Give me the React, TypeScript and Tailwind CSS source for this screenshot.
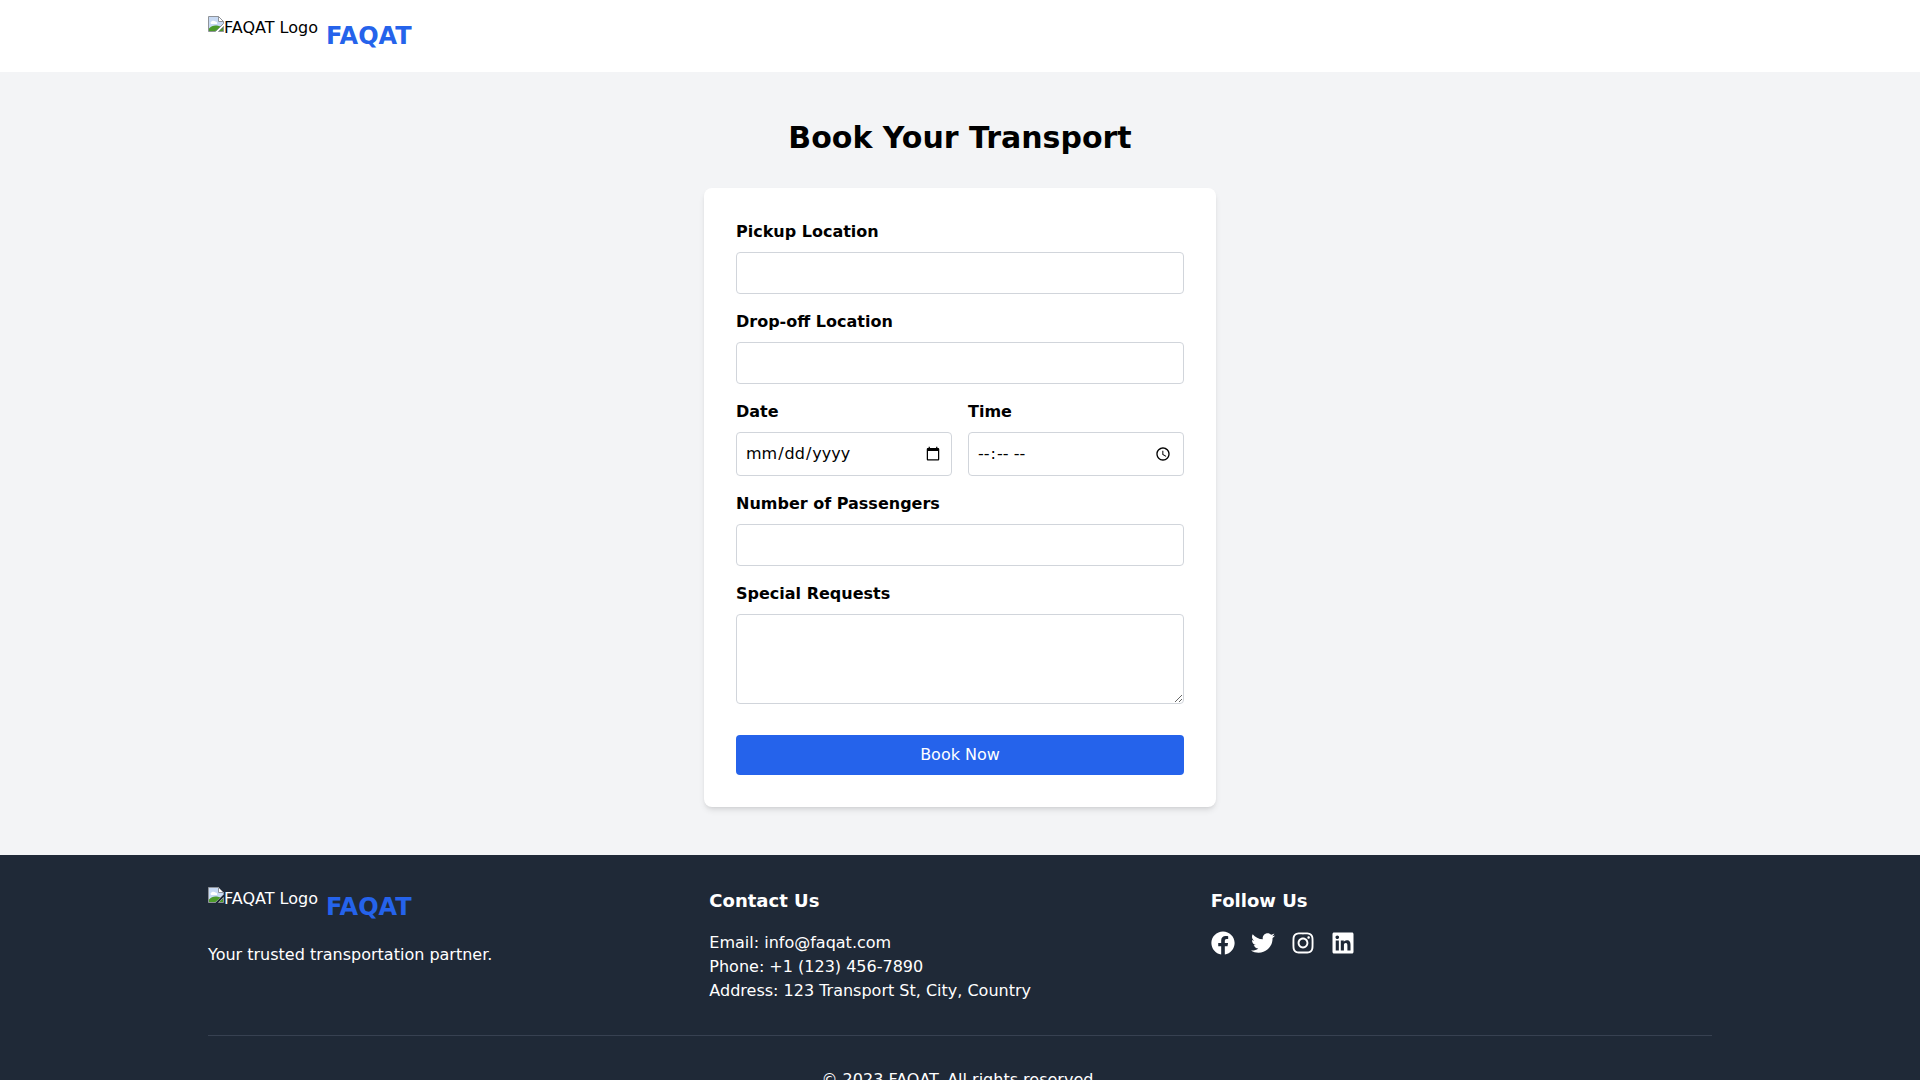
import React from 'react';
import { FaFacebook, FaTwitter, FaInstagram, FaLinkedin } from 'react-icons/fa';

// broken image glyph shown in place of the logo
function BrokenImage() {
  return (
    <svg width="16" height="16" viewBox="0 0 16 16" className="inline-block align-baseline shrink-0">
      <path d="M0.5 0.5H10.5L15.5 5.5V7.5L7.5 15.5H0.5Z" fill="#c8daf4" stroke="#8f9399" />
      <path d="M10.5 0.5V5.5H15.5Z" fill="#fff" stroke="#8f9399" />
      <path d="M2.5 6.5C3.5 4.5 6 4 7.5 5.5C9 5.5 9.5 7 9 8H3Z" fill="#fff" />
      <path d="M1 15V12.5C3 10 6 9 9 9.5L12.5 10.5L7.5 15Z" fill="#4c9a2a" />
      <path d="M15.5 10.5V15.5H10.5Z" fill="#4c9a2a" stroke="#8f9399" />
    </svg>
  );
}

function Logo() {
  return (
    <div className="flex items-center">
      <div className="h-10 mr-2 flex items-start text-base leading-6">
        <BrokenImage />
        <span>FAQAT Logo</span>
      </div>
      <span className="text-2xl font-bold text-[#2563eb]">FAQAT</span>
    </div>
  );
}

function Field({ label, children, className = 'mb-4' }: { label: string; children: React.ReactNode; className?: string }) {
  return (
    <div className={className}>
      <label className="block font-bold mb-2 text-black">{label}</label>
      {children}
    </div>
  );
}

const inputClass = 'w-full border border-[#d1d5db] rounded p-2 bg-white text-black';

export default function App() {
  return (
    <div className="min-h-screen bg-[#f3f4f6] text-black font-['DejaVu_Sans',sans-serif]">
      <header className="bg-white h-[72px]">
        <div className="max-w-screen-2xl mx-auto px-4 py-4">
          <Logo />
        </div>
      </header>

      <main className="max-w-screen-2xl mx-auto px-4 py-12">
        <h1 className="text-3xl font-bold text-center mb-8">Book Your Transport</h1>
        <form className="max-w-lg mx-auto bg-white rounded-lg shadow-md p-8">
          <Field label="Pickup Location">
            <input type="text" className={`${inputClass} block`} />
          </Field>
          <Field label="Drop-off Location">
            <input type="text" className={`${inputClass} block`} />
          </Field>
          <div className="grid grid-cols-2 gap-4 mb-4">
            <Field label="Date" className="">
              <input type="date" className={`${inputClass} block h-11`} />
            </Field>
            <Field label="Time" className="">
              <input type="time" className={`${inputClass} block h-11`} />
            </Field>
          </div>
          <Field label="Number of Passengers">
            <input type="number" className={`${inputClass} block`} />
          </Field>
          <Field label="Special Requests" className="mb-6">
            <textarea rows={3} className={inputClass} />
          </Field>
          <button type="button" className="w-full bg-[#2563eb] text-white py-2 rounded">Book Now</button>
        </form>
      </main>

      <footer className="bg-[#1f2937] text-white py-8">
        <div className="max-w-screen-2xl mx-auto px-4">
          <div className="grid grid-cols-3">
            <div>
              <div className="mb-4">
                <Logo />
              </div>
              <p>Your trusted transportation partner.</p>
            </div>
            <div>
              <h3 className="text-lg font-bold mb-4">Contact Us</h3>
              <p>Email: info@faqat.com</p>
              <p>Phone: +1 (123) 456-7890</p>
              <p>Address: 123 Transport St, City, Country</p>
            </div>
            <div>
              <h3 className="text-lg font-bold mb-4">Follow Us</h3>
              <div className="flex gap-4 text-2xl">
                <FaFacebook />
                <FaTwitter />
                <FaInstagram />
                <FaLinkedin />
              </div>
            </div>
          </div>
          <div className="border-t border-[#374151] mt-8 pt-8 text-center">
            <p>© 2023 FAQAT. All rights reserved.</p>
          </div>
        </div>
      </footer>
    </div>
  );
}
